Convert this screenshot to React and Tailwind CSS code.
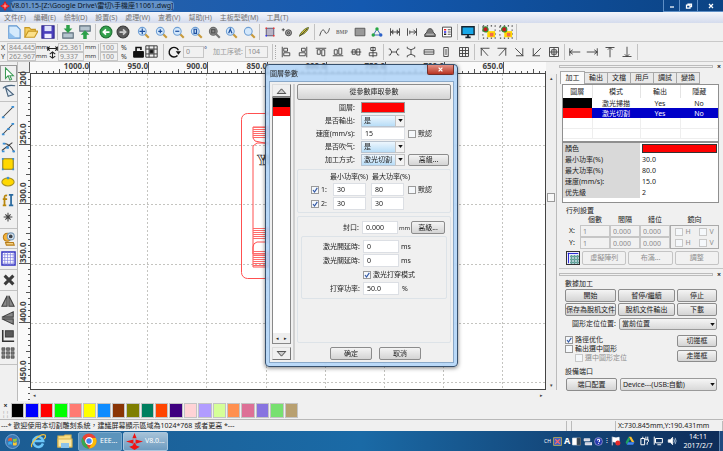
import React from 'react';
import clsx from 'clsx';

const BTN = 'flex items-center justify-center border border-[#8c8c8c] rounded-[2px] bg-linear-to-b from-[#f4f4f4] to-[#d4d4d4] whitespace-nowrap';
const BTN_OFF = 'flex items-center justify-center border border-[#c4c4c4] rounded-[2px] bg-[#f1f1f1] text-[#8f8f8f] whitespace-nowrap';
const FIELD = 'min-w-0 border border-[#dcdfe4] bg-white pl-[3px] h-[13px]';
const FIELD_OFF = 'min-w-0 border border-[#c6c6c6] bg-[#f1f1f1] text-[#8a8a8a]';

const Icon = ({ children, size = 'size-[14px]', label }) => (
    <svg viewBox="0 0 16 16" className={clsx(size, 'shrink-0')} fill="none" stroke="#3f3f3f" strokeWidth="1.2" role="img" aria-label={label}>
        {children}
    </svg>
);

const Tool = ({ label, children, size }) => (
    <button type="button" aria-label={label} className="flex w-[16px] shrink-0 items-center justify-center">
        <Icon size={size}>{children}</Icon>
    </button>
);

const Group = ({ className, children }) => (
    <div className={clsx('flex shrink-0 items-center justify-around', className)}>{children}</div>
);

const Sep = () => <div className="mx-px h-[16px] w-px shrink-0 bg-[#c2c2c2]" />;

const Check = ({ label, checked, disabled, className }) => (
    <label className={clsx('flex items-center gap-[2px] whitespace-nowrap', disabled && 'text-[#8f8f8f]', className)}>
        <span className="relative flex">
            <input type="checkbox" defaultChecked={checked} disabled={disabled} className="peer size-[8px] appearance-none border border-[#9a9a9a] bg-[#f5f8fb] disabled:border-[#c8c8c8]" />
            <svg viewBox="0 0 8 8" className="pointer-events-none absolute inset-0 hidden size-[8px] peer-checked:block" fill="none" stroke="#3459a6" strokeWidth="1.2">
                <path d="M2 4l1.5 2L6.3 1.8" />
            </svg>
        </span>
        {label}
    </label>
);

const Select = ({ id, label, options, className, arrowBox }) => (
    <span className={clsx('relative flex', className)}>
        <select id={id} aria-label={label} className={clsx('h-full w-full appearance-none border pl-[2px]', arrowBox ? 'border-[#b9c4d0] bg-linear-to-b from-[#edf6fd] to-[#b8ddf7]' : 'rounded-[2px] border-[#9a9a9a] bg-linear-to-b from-[#f5f5f5] to-[#d9d9d9]')}>
            {options.map((o) => <option key={o}>{o}</option>)}
        </select>
        <span className={clsx('pointer-events-none absolute inset-y-0 right-0 flex w-[10px] items-center justify-center', arrowBox && 'border border-[#c4c4c4] bg-[#f3f3f3]')}>
            <svg viewBox="0 0 6 4" className="h-[3px] w-[5px]"><path d="M0 0h6L3 4z" fill="#111" /></svg>
        </span>
    </span>
);

const Lens = ({ gray, mark }) => (
    <>
        <path d="M9.5 9.5l5 5" stroke={gray ? '#777' : '#c89a3c'} strokeWidth="2.6" />
        <circle cx="6.5" cy="6.5" r="4.8" fill={gray ? '#8d8d8d' : '#d4e8fb'} stroke={gray ? '#6b6b6b' : '#6f9fd4'} strokeWidth="1.3" />
        {mark && <path d={mark} stroke={gray ? '#555' : '#1d4f9e'} strokeWidth="1.5" />}
    </>
);

const MENU = ['文件(F)', '編輯(E)', '繪制(D)', '設置(S)', '處理(W)', '查看(V)', '幫助(H)', '主板型號(M)', '工具(T)'];

const LENSES = [
    { id: '移動', mark: 'M6.5 3v7M3 6.5h7' },
    { id: '放大', mark: 'M6.5 4v5M4 6.5h5' },
    { id: '縮小', mark: 'M4 6.5h5' },
    { id: '頁面', mark: 'M5 4h3v5H5z' },
    { id: '數據', mark: 'M4.5 4.5h4v4h-4z', gray: true },
    { id: '全部', mark: 'M4.5 9l2-5 2 5' },
    { id: '框選' },
];

const SHAPE_TOOLS = [
    ['選框', <><path d="M3 3h10v10H3z" fill="#b9b4c6" stroke="#55506e" /><path d="M2 2h2v2H2zM12 2h2v2h-2zM12 12h2v2h-2z" fill="#e33" stroke="none" /><path d="M2 12h2v2H2z" fill="#33e" stroke="none" /></>],
    ['設置', <><circle cx="10" cy="9" r="4" fill="#aaa" /><circle cx="10" cy="9" r="1.5" /><path d="M1 5h4M3 3v4" /></>],
    ['筆', <><path d="M2 13c2-5 7-10 12-11-1 5-6 9-12 11z" fill="#d9c62c" stroke="#4d5c22" /><path d="M2 14L12 4" /></>],
];

const PROCESS_TOOLS = [
    ['曲線', <path d="M1 13C4 2 7 5 8 8s4 3 6-5" />],
    ['BMP', <text x="0" y="11" fontSize="7" fontWeight="700" fill="#777" stroke="none" fontFamily="Liberation Serif, serif">BMP</text>],
    ['矩形', <path d="M1.500 3h13v10h-13z" fill="#999" stroke="#555" />],
    ['節點', <><path d="M8 4L3 12h10z" stroke="#2b5fb0" /><circle cx="8" cy="4" r="2.300" fill="#28a745" stroke="none" /><circle cx="3" cy="12" r="2.300" fill="#28a745" stroke="none" /><circle cx="13" cy="12" r="2.300" fill="#2b60c8" stroke="none" /></>],
    ['間距', <path d="M2 3v10M14 3v10M2 8h12M5 5v6M11 5v6M5 6L3 8l2 2M11 6l2 2-2 2" />],
    ['邊距', <path d="M2 3v10M14 3v10M5 8h9M10 5l3 3-3 3M5 6v5" />],
    ['雲', <><path d="M4 8c0-6 8-6 8 0l3 3v3H1v-3z" fill="#777" stroke="#444" /><path d="M3 11h10" stroke="#ccc" /></>],
    ['清單', <><path d="M2 1.500h12v13H2z" fill="#fff" /><path d="M4 5h3" stroke="#e22" strokeWidth="2" /><path d="M4 8h3" stroke="#22e" strokeWidth="2" /><path d="M4 11h3" stroke="#222" strokeWidth="2" /><path d="M9 5h4M9 8h4M9 11h4" /></>],
];

const ALIGN_TOOLS = [
    ['左對齊', 'M3 1v14M5 3h5v4H5zM5 9h8v4H5z'],
    ['右對齊', 'M13 1v14M6 3h5v4H6zM3 9h8v4H3z'],
    ['上對齊', 'M1 3h14M3 5h4v6H3zM9 5h4v8H9z'],
    ['下對齊', 'M1 13h14M3 5h4v6H3zM9 3h4v8H9z'],
    ['水平居中', 'M1 8h14M3 5h4v6H3zM9 4h4v8H9z'],
    ['垂直居中', 'M8 1v14M5 2h6v4H5zM3 9h10v4H3z'],
];
const SPACE_TOOLS = [
    ['等水平距', 'M1 4h2l2 4-2 4H1M15 4h-2l-2 4 2 4h2M5 8h6'],
    ['等垂直距', 'M3 1v2l5 2 5-2V1M3 15v-2l5-2 5 2v2M8 5v6'],
    ['等寬', 'M1.500 5h13v6h-13zM1.500 8h13'],
    ['等高', 'M5 2h6v12H5zM8 4v8'],
    ['等大', 'M2 2h12v12H2zM2 6h12M2 10h12M6 2v12M10 2v12'],
];
const CORNER_TOOLS = [
    ['左上', 'M2 3h12M3 3v10M3 3l9 10'],
    ['右上', 'M2 3h12M13 3v10M13 3L4 13'],
    ['右下', 'M4 13h10M13 3v10M3 3l10 10'],
    ['左下', 'M2 13h10M3 3v10M13 3L3 13'],
    ['中心', 'M2 2h12v12H2zM2 8h12M8 2v12M5 5h6v6H5z'],
];
const EDGE_TOOLS = [
    ['靠左', 'M1 3v10M1 8h14M5 5L1 8l4 3'],
    ['靠右', 'M15 3v10M1 8h14M11 5l4 3-4 3'],
    ['靠上', 'M2 2h12M8 2v13M5 5l3-3 3 3'],
    ['靠下', 'M2 14h12M8 1v13M5 11l3 3 3-3'],
];

const SWATCHES = [
    'bg-black', 'bg-[#0000ff]', 'bg-[#ff0000]', 'bg-[#00ff00]', 'bg-[#ff7b72]', 'bg-[#ffff00]', 'bg-[#0f8cff]',
    'bg-[#8a3505]', 'bg-[#7f7f00]', 'bg-[#007f5f]', 'bg-[#ff4500]', 'bg-[#3f0080]', 'bg-[#ffd3d6]', 'bg-[#b19cff]',
    'bg-[#d5ff98]', 'bg-[#ff9050]', 'bg-[#dd7096]', 'bg-[#8874e0]', 'bg-[#78e070]', 'bg-[#b8a070]',
];

// One ruler unit (50 mm) in screen pixels
const STEP = 59.2;

const Ruler = ({ vertical }) => {
    const first = vertical ? 12 : 59;
    const labels = vertical
        ? ['200', '250.0', '300.0', '350.0', '400.0', '450.0']
        : ['1000.0', '950.0', '900.0', '850.0', '800.0', '750.0', '700.0', '650.0'];
    const ticks = Array.from({ length: vertical ? 55 : 87 }, (_, i) => i - (vertical ? 1 : 9));
    return (
        <svg className={clsx('overflow-visible bg-[#fafafa]', vertical ? 'w-[12px] shrink-0' : 'h-[11px] min-w-0 flex-1')} aria-hidden="true">
            {ticks.map((t) => {
                const p = Math.round(first + (t * STEP) / 10);
                const len = t % 10 === 0 ? 11 : t % 5 === 0 ? 4 : 2;
                return vertical
                    ? <path key={t} d={`M12 ${p + 0.5}h${-len}`} stroke="#555" />
                    : <path key={t} d={`M${p + 0.5} 11v${-len}`} stroke="#555" />;
            })}
            {labels.map((l, i) => {
                const p = Math.round(first + i * STEP);
                return vertical
                    ? <text key={l} transform={`translate(8 ${p}) rotate(-90)`} fontSize="8" fontWeight="700" fill="#444">{l}</text>
                    : <text key={l} x={p} y="7" textAnchor="end" fontSize="8" fontWeight="700" fill="#444">{l}</text>;
            })}
        </svg>
    );
};

const Hatch = ({ y, count }) => (
    <path d={Array.from({ length: count }, (_, i) => `M222 ${y + i * 2}h18`).join('')} stroke="#ff6b6b" />
);

const Canvas = () => (
    <svg className="min-h-0 w-full flex-1 border border-[#444] bg-white" aria-label="繪圖區">
        <g stroke="#c4c4c0" strokeDasharray="2 2">
            {Array.from({ length: 8 }, (_, i) => <path key={i} d={`M${Math.round(58 + i * STEP) - 0.5} 0v900`} />)}
            {Array.from({ length: 6 }, (_, i) => <path key={i} d={`M0 ${Math.round(12 + i * STEP) + 0.5}h2000`} />)}
        </g>
        <g fill="none" stroke="#ff5050">
            <rect x="210.5" y="39.500" width="200" height="165" rx="6" />
            <path d="M240 53h-18v11l2 3 14 3M240 69h-14l-4 3v108h18M240 168h-14q-4 1-4 5v20h18" />
            <Hatch y={53.5} count={6} />
            <Hatch y={154.5} count={6} />
            <Hatch y={177.5} count={8} />
        </g>
        <text x="226" y="91" fontSize="14" fontWeight="700" fontFamily="Liberation Serif, serif" fill="#fff" stroke="#222" strokeWidth="0.7">YOU</text>
    </svg>
);

const TitleBar = () => (
    <header className="flex h-[12px] items-center bg-linear-to-r from-[#2c64a8] via-[#1459b0] to-[#0b4384]">
        <svg viewBox="0 0 16 16" className="mr-px size-[10px] shrink-0"><path d="M8 0l3 5 5 3-5 3-3 5-3-5-5-3 5-3z" fill="#f01414" /><path d="M8 4v8M4 8h8" stroke="#fff" /></svg>
        <h1 className="rounded-sm bg-[#8fb4dc]/60 pr-px leading-[10px] whitespace-nowrap text-[#0b1626]">V8.01.15-[Z:\Google Drive\雷切\手機座11061.dwg]</h1>
        <div className="ml-auto flex h-full text-white">
            {['M4 10h8', 'M3 6h7v6H3zM6 6V4h7v5h-3', 'M4 4l8 8M12 4l-8 8'].map((d, i) => (
                <button key={d} type="button" aria-label={['最小化', '還原', '關閉'][i]} className={clsx('flex items-center justify-center border-b border-l border-[#5f8fc6]', ['w-[16px]', 'w-[18px]', 'w-[26px]'][i])}>
                    <svg viewBox="0 0 16 16" className="size-[8px]" fill="none" stroke="#fff" strokeWidth="2.500"><path d={d} /></svg>
                </button>
            ))}
        </div>
    </header>
);

const FileBar = () => (
    <div className="flex h-[19px] items-center border-b border-[#c9c9c9] bg-[#f0f0f0] pl-[5px]">
        <Group className="w-[51px]">
            <Tool label="新建"><path d="M2 1h9l4 4v10H2z" fill="#d5eafc" stroke="#5b93cf" /><path d="M2 15V8l9 7z" fill="#8fc0ee" stroke="none" /></Tool>
            <Tool label="打開"><path d="M1 14V3h5l2 2h5v3" fill="#f6cf5e" stroke="#c79722" /><path d="M1 14l4-7h11l-4 7z" fill="#fbe08a" stroke="#c79722" /></Tool>
            <Tool label="保存"><path d="M1 1h14v14H1z" fill="#4a3fbd" stroke="#31288f" /><path d="M4 1h8v6H4z" fill="#dfe3fa" stroke="none" /><path d="M4 10h8v5H4z" fill="#eef" stroke="none" /></Tool>
        </Group>
        <Sep />
        <Group className="w-[35px]">
            <Tool label="導入"><path d="M2 9h12v6H2z" fill="#b6c5cf" stroke="#5d6f7c" /><path d="M6 0h4v4h3l-5 5-5-5h3z" fill="#2da04a" stroke="none" /></Tool>
            <Tool label="導出"><path d="M2 1h12v6H2z" fill="#b6c5cf" stroke="#5d6f7c" /><path d="M6 16h4v-5h3L8 6l-5 5h3z" fill="#2da04a" stroke="none" /></Tool>
        </Group>
        <Sep />
        <Group className="w-[35px]">
            <Tool label="撤銷"><circle cx="8" cy="8" r="6.800" fill="#33a04c" stroke="#1c6f31" /><path d="M12 8H5M8 5L5 8l3 3" stroke="#fff" strokeWidth="2" /></Tool>
            <Tool label="恢復"><circle cx="8" cy="8" r="6.800" fill="#5b5b5b" stroke="#3a3a3a" /><path d="M4 8h7M8 5l3 3-3 3" stroke="#ccc" strokeWidth="2" /></Tool>
        </Group>
        <Group className="ml-[3px] w-[123px]">
            {LENSES.map((l) => <Tool key={l.id} label={l.id} size="size-[13px]"><Lens {...l} /></Tool>)}
        </Group>
        <Sep />
        <Group className="w-[52px]">
            {SHAPE_TOOLS.map(([l, d]) => <Tool key={l} label={l} size="size-[12px]">{d}</Tool>)}
        </Group>
        <Sep />
        <Group className="w-[140px]">
            {PROCESS_TOOLS.map(([l, d]) => <Tool key={l} label={l} size="size-[12px]">{d}</Tool>)}
        </Group>
        <Sep />
        <Group className="w-[18px]">
            <Tool label="預覽"><path d="M1 2h14v9H1z" fill="#18a8e8" stroke="#16242f" strokeWidth="1.600" /><path d="M5 14h6M8 11v3" stroke="#16242f" strokeWidth="2" /></Tool>
        </Group>
        <Sep />
        <Group className="w-[35px]">
            {['組合', '解組'].map((l, i) => (
                <Tool key={l} label={l}>
                    <path d="M1 1h14v14H1z" strokeDasharray="1.500 3" />
                    <path d="M6 7h9v7H6z" fill="#ffd800" stroke="none" />
                    <path d="M9 9h4v4H9z" fill="#f06a4c" stroke="none" />
                    <circle cx={i ? 6 : 4} cy="5" r="3" fill="#c11c1c" stroke="#289a3a" />
                </Tool>
            ))}
        </Group>
        <Sep />
    </div>
);

const PathTools = ({ items, className }) => (
    <Group className={className}>
        {items.map(([l, d]) => <Tool key={l} label={l} size="size-[12px]"><path d={d} /></Tool>)}
    </Group>
);

const Pair = ({ names, values, width }) => (
    <div className="flex shrink-0 flex-col">
        {names.map((n, i) => <input key={n} aria-label={n} defaultValue={values[i]} disabled className={clsx(FIELD_OFF, 'h-[9px] pl-px', width)} />)}
    </div>
);

const TransformBar = () => (
    <div className="flex h-[20px] items-center border-b border-[#c9c9c9] bg-[#f0f0f0] leading-[9px] text-[#333]">
        <div className="w-[7px] shrink-0 pl-[1px]">X<br />Y</div>
        <Pair names={['X', 'Y']} values={['844.445', '262.967']} width="w-[29px]" />
        <div className="w-[11px] shrink-0 text-[6px]">mm<br />mm</div>
        <Icon size="h-[18px] w-[11px]" label="尺寸"><path d="M1 0v6M15 0v6M1 3h14M4 0L1 3l3 3M12 0l3 3-3 3M8 9v7M4 11l4-3 4 3M4 14l4 3 4-3" stroke="#222" strokeWidth="1.500" /></Icon>
        <Pair names={['寬', '高']} values={['25.361', '9.337']} width="w-[26px]" />
        <div className="w-[13px] shrink-0 pl-px text-[6px]">mm<br />mm</div>
        <Sep />
        <Pair names={['寬比例', '高比例']} values={['100', '100']} width="w-[18px]" />
        <div className="w-[14px] shrink-0 pl-[3px]">%<br />%</div>
        <button type="button" aria-label="鎖定比例" className="w-[13px] shrink-0"><Icon size="size-[13px]"><path d="M2 8h12v7H2z" fill="#111" stroke="#111" /><path d="M5 8V3h6v3" stroke="#111" strokeWidth="2" /></Icon></button>
        <button type="button" aria-label="參考點" className="mr-[4px] w-[13px] shrink-0"><Icon size="size-[13px]"><path d="M1 1h14v14H1zM5 1v14M11 1v14M1 5h14M1 11h14" /><path d="M6 6h4v4H6z" fill="#111" /></Icon></button>
        <Sep />
        <Group className="w-[18px]">
            <Tool label="旋轉"><path d="M12 12A5.500 5.500 0 1 1 13 6" stroke="#111" strokeWidth="1.600" /><path d="M10 7h6l-3 4z" fill="#111" stroke="none" /></Tool>
        </Group>
        <input aria-label="角度" defaultValue="0" disabled className={clsx(FIELD_OFF, 'h-[12px] w-[21px] shrink-0 pl-[2px]')} />
        <span className="w-[9px] shrink-0 pb-[4px] text-[#1d3d80]">°</span>
        <label className="flex shrink-0 items-center gap-[2px] pr-[3px] whitespace-nowrap text-[#999]">
            加工序號:
            <input defaultValue="104" disabled className={clsx(FIELD_OFF, 'h-[12px] w-[23px] pl-[2px]')} />
        </label>
        <Sep />
        <div className="ml-px h-[14px] w-[2px] shrink-0 border-l border-dotted border-[#aaa]" />
        <PathTools items={ALIGN_TOOLS} className="w-[105px]" />
        <Sep />
        <PathTools items={SPACE_TOOLS} className="w-[88px]" />
        <Sep />
        <PathTools items={CORNER_TOOLS} className="w-[87px]" />
        <Sep />
        <PathTools items={EDGE_TOOLS} className="w-[70px]" />
        <Sep />
    </div>
);

const Rule = ({ className = 'h-[4px]' }) => <div className={clsx('flex items-center', className)}><span className="h-px flex-1 bg-[#c2c2c2]" /></div>;

const SideTools = () => (
    <nav className="flex w-[18px] shrink-0 flex-col items-stretch border-r border-[#bbb] bg-[#f0f0f0] pt-[3px]">
        <button type="button" aria-label="選取" className="flex h-[17px] items-center justify-center border border-[#999]"><Icon><path d="M4 1v12l3-3 2 5 2-1-2-4h4z" fill="#fff" stroke="#3b9a55" /></Icon></button>
        <button type="button" aria-label="節點編輯" className="flex h-[17px] items-center justify-center"><Icon><path d="M4 4l9 8-6 2zM1 5c3-3 8-4 14-3" fill="#dce8f4" stroke="#49637c" /></Icon></button>
        <Rule />
        <div className="flex h-[123px] flex-col justify-around">
            <Tool label="直線"><path d="M2 14L14 2" /><path d="M1 13h3v2H1zM12 1h3v2h-3z" fill="#3a90d8" stroke="none" /></Tool>
            <Tool label="多段線"><path d="M2 14L14 2" /><path d="M1 13h3v2H1zM12 1h3v2h-3zM7 7h3v2H7z" fill="#3a90d8" stroke="none" /></Tool>
            <Tool label="曲線"><path d="M1 12L13 3M3 4c5 0 9 3 12 10" /><path d="M6 7h3v3H6zM2 3h3v2H2zM13 12h3v2h-3zM1 12h3v2H1z" fill="#3a90d8" stroke="none" /></Tool>
            <Tool label="矩形"><path d="M2 2h12v12H2z" fill="#ffd800" stroke="#8e7b1c" /><path d="M1 1h2v2H1zM13 1h2v2h-2zM1 13h2v2H1zM13 13h2v2h-2z" fill="#3a90d8" stroke="none" /></Tool>
            <Tool label="橢圓"><ellipse cx="8" cy="8" rx="7" ry="4.500" fill="#ffd800" stroke="#a8901e" /><circle cx="8" cy="3.500" r="1" stroke="#3a90d8" /></Tool>
            <Tool label="文字"><path d="M9 2h5M11.500 2v12M9 14h5" stroke="#2a6a9e" strokeWidth="2" /><path d="M7 3q-3-1-3 2v9M2 7h5M2 14h4" stroke="#b8860b" strokeWidth="2" /></Tool>
            <Tool label="點"><path d="M8 3v10M3 8h10M5 5l6 6M11 5l-6 6" /></Tool>
        </div>
        <Rule />
        <button type="button" aria-label="抓取" className="flex h-[17px] items-center justify-center"><Icon><circle cx="6" cy="6" r="4.500" fill="#f5b33b" stroke="#b87d1a" /><circle cx="10" cy="5" r="4" fill="#dbe9f6" stroke="#7d9cb8" /><circle cx="10" cy="5" r="1.500" fill="#345" /><path d="M4 12h9l1 3H5z" fill="#f5d080" stroke="#b87d1a" /></Icon></button>
        <Rule className="h-[3px]" />
        <button type="button" aria-label="格點" className="flex h-[17px] items-center justify-center"><Icon size="size-[15px]"><path d="M1 1h14v14H1z" fill="#fff" stroke="#3030c0" strokeWidth="1.500" /><path d="M4 1v14M7 1v14M10 1v14M13 1v14M1 4h14M1 7h14M1 10h14M1 13h14" stroke="#7a7ae0" strokeWidth="0.700" /></Icon></button>
        <Rule />
        <button type="button" aria-label="刪除" className="flex h-[17px] items-center justify-center"><Icon><path d="M3 3l10 10M13 3L3 13" stroke="#3a3a3a" strokeWidth="3.500" /></Icon></button>
        <Rule />
        <div className="flex h-[70px] flex-col justify-around">
            <Tool label="水平鏡像"><path d="M7 2v12H1zM9 2v12h6z" fill="#888" /></Tool>
            <Tool label="垂直鏡像"><path d="M14 1v6H1zM14 15V9H1z" fill="#888" /></Tool>
            <Tool label="對齊"><path d="M5 2h9v7H5z" fill="#5a5a5a" /><path d="M2 1v13h13" stroke="#333" strokeWidth="1.800" /></Tool>
            <Tool label="陣列"><path d="M1 2h3.500v3H1zM6.300 2h3.500v3H6.300zM11.500 2H15v3h-3.500zM1 6.500h3.500v3H1zM6.300 6.500h3.500v3H6.300zM11.500 6.500H15v3h-3.500zM1 11h3.500v3H1zM6.300 11h3.500v3H6.300zM11.500 11H15v3h-3.500z" fill="#777" strokeWidth="0.700" /></Tool>
        </div>
        <Rule />
    </nav>
);

const Workspace = () => (
    <section className="flex min-w-0 flex-1">
        <div className="flex min-w-0 flex-1 flex-col">
            <div className="flex">
                <div className="w-[12px] shrink-0 border-r border-b border-[#666] bg-[#f0f0f0]" />
                <Ruler />
            </div>
            <div className="flex min-h-0 flex-1">
                <Ruler vertical />
                <div className="flex min-w-0 flex-1 flex-col">
                    <Canvas />
                    <div className="flex h-[11px] items-center justify-between bg-[#f0f0f0] px-[3px] text-[5px] leading-none text-[#444]">
                        <span>◂</span><span>▸</span>
                    </div>
                </div>
            </div>
        </div>
        <div className="mt-[12px] mb-[11px] flex w-[11px] flex-col items-center border-r border-[#bbb] bg-[#eee] py-[2px] text-[5px] leading-none text-[#444]">
            <span>▴</span>
            <span className="flex-[112]" />
            <span className="h-[9px] w-[8px] border border-[#999] bg-[#f8f8f8]" />
            <span className="flex-[180]" />
            <span>▾</span>
        </div>
    </section>
);

const Row = ({ label, htmlFor, children }) => (
    <div className="flex h-[13px] items-center">
        <label htmlFor={htmlFor} className="w-[61px] pr-[3px] text-right whitespace-nowrap">{label}</label>
        {children}
    </div>
);

const LayerDialog = () => (
    <div role="dialog" aria-label="圖層參數" className="absolute top-[2px] left-[265px] w-[193px] rounded-[4px] border border-[#37506c] bg-[#a9cff6]/80 px-[3px] pb-[3px] shadow-[0_1px_4px_rgba(0,0,0,0.5)] backdrop-blur-[1px]">
        <div className="flex h-[16px] items-start justify-between pl-[1px]">
            <h2 className="pt-[4px] leading-[9px]">圖層參數</h2>
            <button type="button" aria-label="關閉" className="flex h-[10px] w-[27px] items-center justify-center rounded-b-[2px] border border-t-0 border-[#72302a] bg-linear-to-b from-[#e29186] to-[#b83220]">
                <svg viewBox="0 0 8 8" className="size-[5px]" stroke="#fff" strokeWidth="2"><path d="M1 1l6 6M7 1L1 7" /></svg>
            </button>
        </div>
        <div className="flex border border-[#8aa9c9] bg-[#f0f0f0] p-[2px]">
            <div className="flex w-[19px] shrink-0 flex-col">
                <button type="button" aria-label="上移" className="flex h-[13px] items-center justify-center border border-[#ddd] border-r-[#777] border-b-[#777]"><svg viewBox="0 0 12 7" className="h-[6px] w-[11px]" fill="#ccc" stroke="#333"><path d="M1 6.500h10L6 1z" /></svg></button>
                <div className="flex flex-1 flex-col border border-[#888] bg-white">
                    <div className="h-[9px] bg-black" />
                    <div className="h-[9px] bg-[#ff0000]" />
                    <div className="mt-auto flex h-[10px] items-center justify-around bg-[#eee] text-[5px]"><span>◂</span><span>▸</span></div>
                </div>
                <button type="button" aria-label="下移" className="mt-[3px] flex h-[13px] items-center justify-center border border-[#ddd] border-r-[#777] border-b-[#777]"><svg viewBox="0 0 12 7" className="h-[6px] w-[11px]" fill="#ccc" stroke="#333"><path d="M1 .5h10L6 6z" /></svg></button>
            </div>
            <div className="mx-[2px] w-[2px] shrink-0 bg-[#d0d0d0]" />
            <div className="flex min-w-0 flex-1 flex-col">
                <button type="button" className={clsx(BTN, 'mb-[1px] h-[16px]')}>從參數庫取參數</button>
                <Row label="圖層:"><span className="ml-[3px] h-[11px] w-[44px] border border-[#999] bg-[#ff0000]" /></Row>
                <Row label="是否輸出:" htmlFor="out"><Select id="out" label="是否輸出" options={['是', '否']} arrowBox className="ml-[3px] h-[12px] w-[44px]" /></Row>
                <Row label="速度(mm/s):" htmlFor="speed">
                    <input id="speed" defaultValue="15" className={clsx(FIELD, 'ml-[3px] w-[44px]')} />
                    <Check label="默認" className="ml-[3px]" />
                </Row>
                <Row label="是否吹气:" htmlFor="blow"><Select id="blow" label="是否吹气" options={['是', '否']} arrowBox className="ml-[3px] h-[12px] w-[44px]" /></Row>
                <Row label="加工方式:" htmlFor="mode">
                    <Select id="mode" label="加工方式" options={['激光切割', '激光掃描']} arrowBox className="ml-[3px] h-[12px] w-[44px]" />
                    <button type="button" className={clsx(BTN, 'ml-[3px] h-[12px] w-[41px]')}>高級...</button>
                </Row>
                <fieldset className="mt-[3px] flex flex-col gap-[1px] rounded-[2px] border border-[#dde3e8] pt-[1px] pb-[2px]">
                    <div className="grid grid-cols-[32px_42px_42px] leading-[11px] whitespace-nowrap"><span className="col-start-2">最小功率(%)</span><span>最大功率(%)</span></div>
                    {[['1:', '30', '80'], ['2:', '30', '30']].map(([n, min, max], i) => (
                        <div key={n} className="flex h-[13px] items-center">
                            <Check label={n} checked className="ml-[13px] w-[22px]" />
                            <input aria-label={`最小功率 ${n}`} defaultValue={min} className={clsx(FIELD, 'w-[33px]')} />
                            <input aria-label={`最大功率 ${n}`} defaultValue={max} className={clsx(FIELD, 'ml-[5px] w-[33px]')} />
                            {i === 0 && <Check label="默認" className="ml-[4px]" />}
                        </div>
                    ))}
                </fieldset>
                <fieldset className="mt-[3px] flex h-[127px] flex-col rounded-[2px] border border-[#dde3e8] px-[3px] pt-[4px]">
                    <Row label="封口:" htmlFor="seal">
                        <input id="seal" defaultValue="0.000" className={clsx(FIELD, 'w-[36px]')} />
                        <span className="w-[13px] shrink-0 pl-px text-[6px]">mm</span>
                        <button type="button" className={clsx(BTN, 'h-[13px] w-[34px] shrink-0')}>高級...</button>
                    </Row>
                    <div className="mt-[2px] flex flex-col gap-[1px] rounded-[2px] border border-[#dde3e8] py-[3px]">
                        <Row label="激光開延時:" htmlFor="on"><input id="on" defaultValue="0" className={clsx(FIELD, 'w-[36px]')} /><span className="ml-[2px]">ms</span></Row>
                        <Row label="激光關延時:" htmlFor="off"><input id="off" defaultValue="0" className={clsx(FIELD, 'w-[36px]')} /><span className="ml-[2px]">ms</span></Row>
                        <Check label="激光打穿模式" checked className="ml-[61px] h-[13px]" />
                        <Row label="打穿功率:" htmlFor="pierce"><input id="pierce" defaultValue="50.0" className={clsx(FIELD, 'w-[36px]')} /><span className="ml-[3px]">%</span></Row>
                    </div>
                </fieldset>
                <div className="mt-[4px] flex gap-[7px] pl-[33px]">
                    <button type="button" className={clsx(BTN, 'h-[13px] w-[42px]')}>确定</button>
                    <button type="button" className={clsx(BTN, 'h-[13px] w-[42px]')}>取消</button>
                </div>
            </div>
        </div>
    </div>
);

const Grip = () => (
    <div className="flex h-[9px] items-center gap-[2px]">
        <span className="h-[3px] flex-1 border border-[#bbb]" />
        <button type="button" aria-label="關閉面板" className="w-[8px] leading-none font-bold">×</button>
    </div>
);

const LAYERS = [
    { swatch: 'bg-black', mode: '激光掃描' },
    { swatch: 'bg-[#ff0000]', mode: '激光切割', active: true },
];

const LayerPanel = () => (
    <div className="pr-[4px]">
        <div className="flex pl-[1px]" role="tablist">
            {['加工', '輸出', '文檔', '用戶', '調試', '變換'].map((t, i) => (
                <button key={t} type="button" role="tab" aria-selected={i === 0} className={clsx('border border-[#a8a8a8]', i === 0 ? 'h-[13px] w-[25px] border-b-0 bg-[#fafafa]' : 'mt-[1px] h-[12px] w-[23px] border-l-0 bg-[#e9e9e9]')}>{t}</button>
            ))}
        </div>
        <div className="ml-[3px] h-[58px] border border-[#8f8f8f] bg-white">
            <table className="w-full table-fixed border-collapse text-center">
                <thead>
                    <tr className="h-[13px]">
                        <th className="w-[29px] font-normal">圖層</th>
                        <th className="w-[48px] border-l border-[#e4e4e4] font-normal">模式</th>
                        <th className="w-[40px] border-l border-[#e4e4e4] font-normal">輸出</th>
                        <th className="border-l border-[#e4e4e4] font-normal">隱藏</th>
                    </tr>
                </thead>
                <tbody className="leading-[9px]">
                    {LAYERS.map((l) => (
                        <tr key={l.mode} className={clsx('h-[10px]', l.active && 'bg-[#0000c8] text-white')}>
                            <td className={l.swatch}></td>
                            <td>{l.mode}</td>
                            <td>Yes</td>
                            <td>No</td>
                        </tr>
                    ))}
                    {[0, 1].map((r) => (
                        <tr key={r} className="h-[10px] border-b border-[#eee]">
                            <td></td><td className="border-l border-[#eee]"></td><td className="border-l border-[#eee]"></td><td className="border-l border-[#eee]"></td>
                        </tr>
                    ))}
                </tbody>
            </table>
        </div>
        <dl className="ml-[3px] grid grid-cols-[77px_1fr] border border-[#8f8f8f] bg-white pb-[4px] *:h-[11px] *:pl-[2px] *:leading-[11px] *:odd:bg-[#d9d9d9]">
            <dt>顏色</dt><dd className="p-[1px]"><div className="h-[9px] border border-[#333] bg-[#ff0000]" /></dd>
            <dt>最小功率(%)</dt><dd>30.0</dd>
            <dt>最大功率(%)</dt><dd>80.0</dd>
            <dt>速度(mm/s):</dt><dd>15.0</dd>
            <dt>优先級</dt><dd>2</dd>
        </dl>
        <section className="pt-[3px] pl-[7px]">
            <h3 className="leading-[9px]">行列設置</h3>
            <div className="grid grid-cols-[14px_30px_30px_30px_1fr] items-center">
                <div className="col-span-5 grid grid-cols-subgrid text-center leading-[10px]"><span /><span>個數</span><span>間隔</span><span>錯位</span><span>鏡向</span></div>
                {['X:', 'Y:'].map((axis) => (
                    <React.Fragment key={axis}>
                        <span className="pl-[3px]">{axis}</span>
                        {['1', '0.000', '0.000'].map((v, i) => <input key={i} aria-label={`${axis} ${['個數', '間隔', '錯位'][i]}`} defaultValue={v} disabled className={clsx(FIELD_OFF, 'h-[12px] pl-[2px]')} />)}
                        <div className={clsx('flex h-[12px] items-center justify-around border-x border-[#aaa]', axis === 'X:' ? 'border-t' : 'border-b')}><Check label="H" disabled /><Check label="V" disabled /></div>
                    </React.Fragment>
                ))}
            </div>
            <div className="mt-[2px] flex h-[14px] gap-[2px]">
                <button type="button" aria-label="陣列設置" className="flex w-[14px] items-center justify-center border border-[#333] bg-[#eef]"><Icon size="size-[12px]"><path d="M1 2h14M2 1v14" stroke="#1515d0" /><path d="M5 5h2v2H5zM9 5h2v2H9zM13 5h2v2h-2zM5 9h2v2H5zM9 9h2v2H9zM13 9h2v2h-2zM5 13h2v2H5zM9 13h2v2H9zM13 13h2v2h-2z" stroke="#27836e" /></Icon></button>
                <button type="button" disabled className={clsx(BTN_OFF, 'flex-1')}>虛擬陣列</button>
                <button type="button" disabled className={clsx(BTN_OFF, 'flex-1')}>布滿...</button>
                <button type="button" disabled className={clsx(BTN_OFF, 'flex-1')}>調整</button>
            </div>
        </section>
    </div>
);

const MachinePanel = () => (
    <div className="pr-[6px] pl-[6px]">
        <h3 className="leading-[9px]">數據加工</h3>
        <div className="mt-[1px] grid grid-cols-[51px_57px_1fr] gap-x-[2px] gap-y-[1px]">
            {['開始', '暫停/繼續', '停止', '保存為脫机文件', '脫机文件輸出', '下載'].map((b) => <button key={b} type="button" className={clsx(BTN, 'h-[13px]')}>{b}</button>)}
        </div>
        <div className="mt-[2px] flex items-center justify-end gap-[3px]">
            <label htmlFor="pos">圖形定位位置:</label>
            <Select id="pos" label="圖形定位位置" options={['當前位置', '原定位點', '機械原點']} className="h-[12px] w-[98px]" />
        </div>
        <div className="mt-[5px] flex h-[28px] justify-between">
            <div className="flex flex-col leading-[9px]">
                <Check label="路徑优化" checked />
                <Check label="輸出選中圖形" />
                <Check label="選中圖形定位" disabled className="ml-[10px]" />
            </div>
            <div className="flex flex-col gap-[3px]">
                <button type="button" className={clsx(BTN, 'h-[12px] w-[40px]')}>切邊框</button>
                <button type="button" className={clsx(BTN, 'h-[12px] w-[40px]')}>走邊框</button>
            </div>
        </div>
        <h3 className="mt-[4px] leading-[9px]">設備端口</h3>
        <div className="mt-[2px] flex gap-[3px]">
            <button type="button" className={clsx(BTN, 'ml-[1px] h-[13px] w-[51px]')}>端口配置</button>
            <Select id="dev" label="設備端口" options={['Device---(USB:自動)']} className="h-[13px] flex-1" />
        </div>
    </div>
);

const Tray = () => (
    <div className="ml-auto flex items-center gap-[2px]">
        <span className="text-[5px]">CH</span>
        <Icon size="size-[9px]" label="輸入法"><path d="M1 1h14v14H1z" fill="#3a62c8" stroke="#e8c840" /><path d="M4 4l8 8M12 4l-8 8" stroke="#f66" strokeWidth="2" /></Icon>
        <span className="text-[9px] font-bold">A</span>
        <Icon size="size-[9px]" label="半形"><path d="M1 2h14v12H1z" fill="#fff" stroke="#fff" /><path d="M9 2h6v12H9z" fill="#345" /></Icon>
        <Icon size="size-[9px]" label="鍵盤"><path d="M2 3h10v4H2zM4 10h12v4H4z" fill="#ccd" stroke="#fff" /></Icon>
        <Icon size="size-[9px]" label="說明"><circle cx="8" cy="8" r="7" fill="#2638b0" stroke="#aac" /><path d="M6 6q0-2 2-2t2 2-2 3M8 11v1.500" stroke="#fff" strokeWidth="2" /></Icon>
        <span className="px-px">⁝</span>
        <Icon size="size-[10px]" label="行動中心"><path d="M2 1v14M3 2l5 1 5-1v7l-5 1-5-1z" fill="#fff" stroke="#fff" /><circle cx="11" cy="11" r="4" fill="#e22b2b" stroke="none" /></Icon>
        <Icon size="ml-[2px] size-[10px]" label="Google Drive"><path d="M6 1h4l5 9h-4z" fill="#fbc02d" stroke="none" /><path d="M6 1l2 4-5 9-2-4z" fill="#1ea362" stroke="none" /><path d="M5 10h10l-2 4H3z" fill="#4285f4" stroke="none" /></Icon>
        <Icon size="ml-[2px] size-[10px]" label="電源"><path d="M3 4h6v10H3zM5 2h2M11 1v5M14 1v5M10 6h5v3l-2 2v3" stroke="#fff" strokeWidth="1.600" /></Icon>
        <Icon size="ml-[2px] size-[10px]" label="網路"><path d="M4 4h11v7H4zM2 1v13M7 14h6" stroke="#fff" strokeWidth="1.600" /></Icon>
        <Icon size="ml-[2px] size-[10px]" label="音量"><path d="M2 6h3l4-4v12l-4-4H2z" fill="#fff" stroke="#fff" /><path d="M11 5q2 3 0 6M13 3q3 5 0 10" stroke="#cde" /></Icon>
        <time className="w-[38px] text-center leading-[9px]">14:11<br />2017/2/7</time>
        <div className="h-[20px] w-[4px] border-l border-[#5c82ad] bg-[#1f4a80]" />
    </div>
);

export default function App() {
    return (
        <div className="flex min-h-screen flex-col overflow-hidden bg-[#f0f0f0] font-['Noto_Sans','Noto_Sans_CJK_TC',sans-serif] text-[7px] leading-[10px] text-[#222]">
            <TitleBar />
            <nav className="flex h-[11px] items-center gap-[8px] bg-linear-to-b from-[#f4f6fb] to-[#d4dbed] pl-[4px] whitespace-nowrap text-[#707070]">
                {MENU.map((m) => <button key={m} type="button">{m}</button>)}
            </nav>
            <FileBar />
            <TransformBar />
            <main className="relative flex flex-1">
                <SideTools />
                <Workspace />
                <aside className="flex w-[166px] shrink-0 flex-col pl-[2px]">
                    <Grip />
                    <LayerPanel />
                    <div className="mt-[3px] mb-px h-px bg-[#c4c4c4]" />
                    <Grip />
                    <MachinePanel />
                </aside>
                <LayerDialog />
            </main>
            <div className="flex h-[18px] items-center">
                <div className="flex w-[11px] flex-col items-center leading-[8px]"><button type="button" aria-label="關閉色板" className="font-bold">×</button><span className="text-[#aaa]">¦¦</span></div>
                <div className="grid h-[15px] w-[287px] grid-cols-20 gap-px">
                    {SWATCHES.map((c) => <button key={c} type="button" aria-label={c.slice(3)} className={clsx('border border-[#c4c4c4]', c)} />)}
                </div>
            </div>
            <footer className="flex h-[12px] items-center border-t border-[#b8b8b8] pl-[1px] whitespace-nowrap">
                <span className="flex-1">---* 歡迎使用本切割雕刻系統，建議屏幕顯示區域為1024*768 或者更高 *---</span>
                <span className="h-[10px] w-[6px] border-x border-[#bbb]" />
                <span className="h-[10px] w-[44px] border-r border-[#bbb]" />
                <span className="w-[107px] border-r border-[#bbb] pl-[2px]">X:730.845mm,Y:190.431mm</span>
            </footer>
            <div className="flex h-[20px] items-center bg-linear-to-r from-[#1c5c92] via-[#1a6aa6] to-[#0e2c58] text-white">
                <button type="button" aria-label="開始" className="flex w-[24px] justify-center"><Icon size="size-[15px]"><circle cx="8" cy="8" r="7.500" fill="#3b78b4" stroke="#8dbce8" strokeWidth=".8" /><path d="M3.500 5q2-1.500 4-.5v3q-2-1-4 .3z" fill="#f0592a" stroke="none" /><path d="M8.500 5q2 .8 4-.4v3q-2 1.200-4 .3z" fill="#8cc63f" stroke="none" /><path d="M3.500 8.800q2-1.300 4-.3v3q-2-1-4 .3z" fill="#35b0f0" stroke="none" /><path d="M8.500 8.900q2 1 4-.3v3q-2 1.200-4 .3z" fill="#fdc82f" stroke="none" /></Icon></button>
                <button type="button" aria-label="Internet Explorer" className="flex w-[27px] justify-center"><Icon size="size-[16px]"><path d="M13 10.500A5 5 0 1 1 13.200 8H4" stroke="#6cc6f8" strokeWidth="2.500" /><path d="M2 14C-1 11 10 0 15 2c1 1 0 3-1 4" stroke="#f5c23a" /></Icon></button>
                <button type="button" aria-label="檔案總管" className="flex w-[27px] justify-center"><Icon size="size-[16px]"><path d="M1 3h6l1-1h6v12H1z" fill="#f8dd83" stroke="#d8b450" /><path d="M1 6h14v8H1z" fill="#fbeaa8" stroke="#d8b450" /><path d="M4 10h8v5H4z" fill="#8dc4ea" stroke="none" /></Icon></button>
                <button type="button" className="flex h-[19px] w-[44px] items-center gap-[3px] rounded-[2px] border border-[#7ba9cc] bg-[#5c94bc] pl-[2px]">
                    <Icon size="size-[16px]"><circle cx="8" cy="8" r="7.500" fill="#e94335" stroke="none" /><path d="M1.500 4.300L8 16A8 8 0 0 1 1.500 4.300z" fill="#34a853" stroke="none" /><path d="M8 15.500A7.500 7.500 0 0 0 14.900 5H8l3 5z" fill="#fbbc05" stroke="none" /><circle cx="8" cy="8" r="3.300" fill="#4285f4" stroke="#fff" /></Icon>
                    EEE...
                </button>
                <button type="button" className="ml-px flex h-[19px] w-[45px] items-center gap-[2px] rounded-[2px] border border-[#a8c6de] bg-linear-to-b from-[#a6c2d8] to-[#6f9cc0] pl-[2px]">
                    <Icon size="size-[17px]"><path d="M8 0l2 5H6zM0 8l7-2v4zM16 8L9 6v4zM8 9l2 3 3 1-5 3-5-3 3-1z" fill="#f01414" stroke="none" /></Icon>
                    V8.0...
                </button>
                <Tray />
            </div>
        </div>
    );
}
